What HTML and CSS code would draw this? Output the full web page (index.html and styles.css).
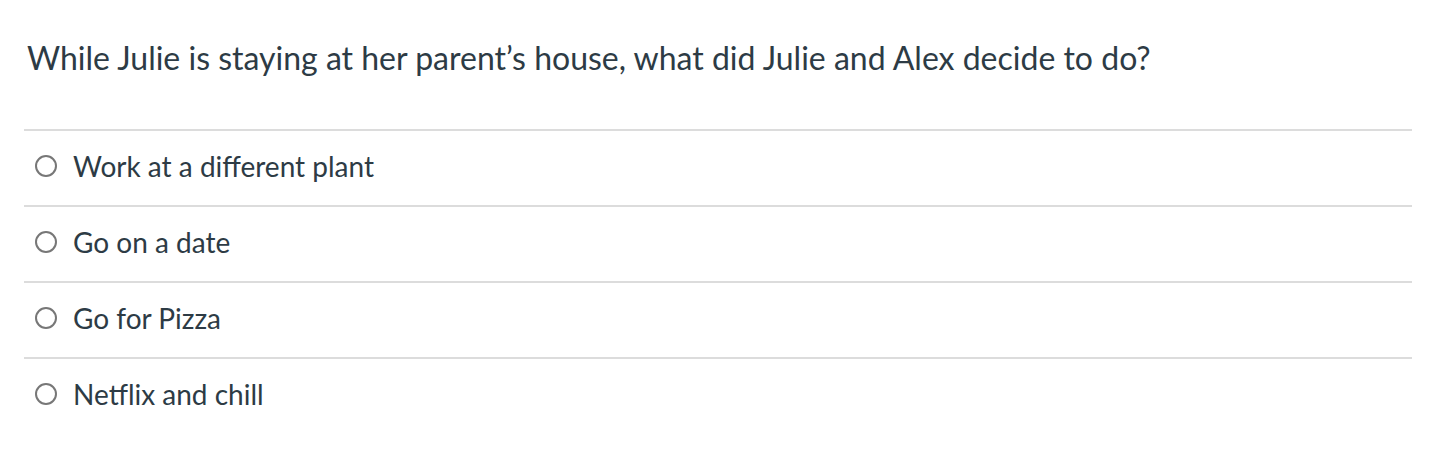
FILE: index.html
```html
<!DOCTYPE html>
<html>
<head>
<meta charset="utf-8">
<link rel="stylesheet" href="styles.css">
</head>
<body>
<div class="quiz">
  <div class="question">While Julie is staying at her parent’s house, what did Julie and Alex decide to do?</div>
  <div class="answers">
    <label class="answer"><span class="radio"></span><span class="label">Work at a different plant</span></label>
    <label class="answer"><span class="radio"></span><span class="label">Go on a date</span></label>
    <label class="answer"><span class="radio"></span><span class="label">Go for Pizza</span></label>
    <label class="answer"><span class="radio"></span><span class="label">Netflix and chill</span></label>
  </div>
</div>
</body>
</html>
```
FILE: styles.css
```css
html, body {
  margin: 0;
  background: #fff;
}
.quiz {
  width: 1388px;
  padding-left: 24px;
  font-family: Lato, "Noto Sans", sans-serif;
  color: #2d3b45;
}
.question {
  font-size: 32px;
  line-height: 36px;
  padding: 40px 0 0 3px;
  height: 129px;
  box-sizing: border-box;
}
.answers {
  display: flex;
  flex-direction: column;
}
.answer {
  display: flex;
  align-items: center;
  gap: 16px;
  height: 76px;
  border-top: 2px solid #dcdcdc;
  box-sizing: border-box;
  padding: 0 0 5px 11px;
  font-size: 28px;
}
.radio {
  width: 22px;
  height: 22px;
  border: 2px solid #777;
  border-radius: 50%;
  box-sizing: border-box;
  flex: none;
}
```
